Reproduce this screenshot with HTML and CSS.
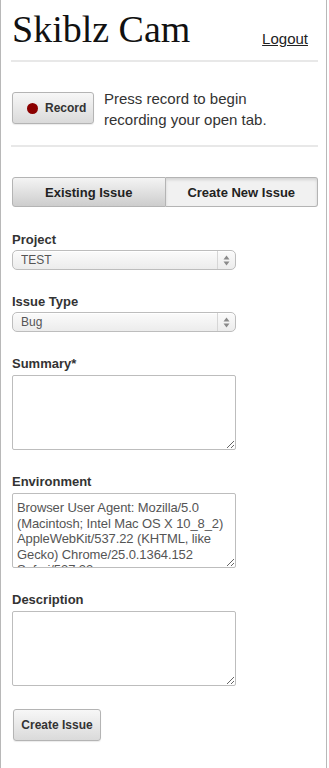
FILE: index.html
```html
<!DOCTYPE html>
<html lang="en">

<head>
    <meta charset="UTF-8">
    <title>Skiblz Cam</title>
    <link rel="stylesheet" href="styles.css">
</head>

<body>

    <div class="page">
        <div class="header">
            <h1>Skiblz Cam</h1>
            <a href="#" class="logout">Logout</a>
        </div>

        <div class="record-row">
            <button class="btn btn-record"><span class="dot"></span>Record</button>
            <p class="record-hint">Press record to begin recording your open tab.</p>
        </div>

        <div class="tabs">
            <button class="tab">Existing Issue</button>
            <button class="tab tab-active">Create New Issue</button>
        </div>

        <form class="issue-form">
            <div class="field">
                <label for="project">Project</label>
                <div class="select-wrap">
                    <select id="project">
                        <option>TEST</option>
                    </select>
                    <span class="select-arrows">
                        <svg width="7" height="11" viewBox="0 0 7 11">
                            <path d="M3.5 0.5 L6.5 4.5 L0.5 4.5 Z" fill="#8a8a8a"/>
                            <path d="M3.5 10.5 L6.5 6.5 L0.5 6.5 Z" fill="#8a8a8a"/>
                        </svg>
                    </span>
                </div>
            </div>

            <div class="field">
                <label for="issuetype">Issue Type</label>
                <div class="select-wrap">
                    <select id="issuetype">
                        <option>Bug</option>
                    </select>
                    <span class="select-arrows">
                        <svg width="7" height="11" viewBox="0 0 7 11">
                            <path d="M3.5 0.5 L6.5 4.5 L0.5 4.5 Z" fill="#8a8a8a"/>
                            <path d="M3.5 10.5 L6.5 6.5 L0.5 6.5 Z" fill="#8a8a8a"/>
                        </svg>
                    </span>
                </div>
            </div>

            <div class="field field-text">
                <label for="summary">Summary*</label>
                <textarea id="summary"></textarea>
            </div>

            <div class="field field-text">
                <label for="environment">Environment</label>
                <textarea id="environment">Browser User Agent: Mozilla/5.0 (Macintosh; Intel Mac OS X 10_8_2) AppleWebKit/537.22 (KHTML, like Gecko) Chrome/25.0.1364.152 Safari/537.22</textarea>
            </div>

            <div class="field field-text">
                <label for="description">Description</label>
                <textarea id="description"></textarea>
            </div>

            <button type="button" class="btn btn-create">Create Issue</button>
        </form>
    </div>

</body>

</html>
```

FILE: styles.css
```css
html,
body {
    margin: 0;
    padding: 0;
    background: #fff;
}

body {
    font-family: "Liberation Sans", Arial, sans-serif;
    color: #333;
}

.page {
    width: 307px;
    min-height: 100vh;
    padding: 0 8px 20px 10px;
    border-left: 1px solid #b8b8b8;
    border-right: 1px solid #b8b8b8;
    box-sizing: content-box;
}

.header {
    display: flex;
    justify-content: space-between;
    align-items: flex-end;
    padding: 7px 10px 9px 1px;
    border-bottom: 2px solid #e8e8e8;
}

.header h1 {
    margin: 0;
    font-family: "Liberation Serif", "Times New Roman", serif;
    font-weight: normal;
    font-size: 38px;
    line-height: 44px;
    color: #111;
}

.logout {
    font-size: 15px;
    line-height: 17px;
    padding-bottom: 4px;
    color: #222;
    text-decoration: underline;
}

.record-row {
    display: flex;
    align-items: center;
    gap: 10px;
    padding: 26px 0 15px 1px;
    border-bottom: 2px solid #e8e8e8;
}

.record-hint {
    margin: 0;
    max-width: 175px;
    font-size: 15px;
    line-height: 21px;
    color: #333;
}

.btn {
    font-family: "Liberation Sans", Arial, sans-serif;
    font-weight: bold;
    font-size: 12px;
    color: #333;
    background: linear-gradient(#f7f7f7, #dadada);
    border: 1px solid #b4b4b4;
    border-radius: 3px;
    box-shadow: 0 1px 1px rgba(0, 0, 0, 0.08);
    cursor: pointer;
}

.btn-record {
    flex: none;
    display: flex;
    align-items: center;
    gap: 7px;
    width: 82px;
    height: 32px;
    margin-top: -2px;
    padding: 0 0 0 14px;
}

.dot {
    width: 11px;
    height: 11px;
    border-radius: 50%;
    background: #8b0000;
}

.tabs {
    display: flex;
    margin: 30px 0 0 1px;
}

.tab {
    flex: 1;
    height: 30px;
    font-family: "Liberation Sans", Arial, sans-serif;
    font-weight: bold;
    font-size: 13px;
    color: #222;
    background: linear-gradient(#f4f4f4, #cdcdcd);
    border: 1px solid #b4b4b4;
    border-radius: 3px 0 0 3px;
    padding: 0;
    cursor: pointer;
}

.tab-active {
    background: #f1f1f1;
    border-left: none;
    border-radius: 0 3px 3px 0;
    box-shadow: inset 0 2px 3px rgba(0, 0, 0, 0.12);
}

.issue-form {
    padding: 1px 0 0 1px;
}

.field {
    margin-top: 24px;
}

.field label {
    display: block;
    font-weight: bold;
    font-size: 13px;
    line-height: 16px;
    color: #333;
    margin-bottom: 2px;
}

.field-text label {
    margin-bottom: 3px;
}

.select-wrap {
    position: relative;
    width: 224px;
}

.select-wrap select {
    appearance: none;
    -webkit-appearance: none;
    display: block;
    width: 100%;
    height: 20px;
    padding: 0 0 0 8px;
    font-family: "Liberation Sans", Arial, sans-serif;
    font-size: 12px;
    color: #555;
    background: linear-gradient(#fbfbfb, #ececec);
    border: 1px solid #bdbdbd;
    border-radius: 5px;
    box-shadow: inset 0 1px 0 #fff;
}

.select-arrows {
    position: absolute;
    top: 1px;
    right: 1px;
    bottom: 1px;
    width: 17px;
    display: flex;
    align-items: center;
    justify-content: center;
    border-left: 1px solid #d6d6d6;
    pointer-events: none;
}

.field textarea {
    display: block;
    width: 224px;
    height: 75px;
    box-sizing: border-box;
    padding: 6px 4px 0;
    font-family: "Liberation Sans", Arial, sans-serif;
    font-size: 13px;
    letter-spacing: -0.1px;
    line-height: 15.5px;
    color: #555;
    border: 1px solid #bdbdbd;
    border-radius: 2px;
    overflow: hidden;
    margin: 0;
}

.btn-create {
    display: block;
    width: 88px;
    height: 32px;
    margin: 23px 0 0 1px;
    padding: 0;
}
```
